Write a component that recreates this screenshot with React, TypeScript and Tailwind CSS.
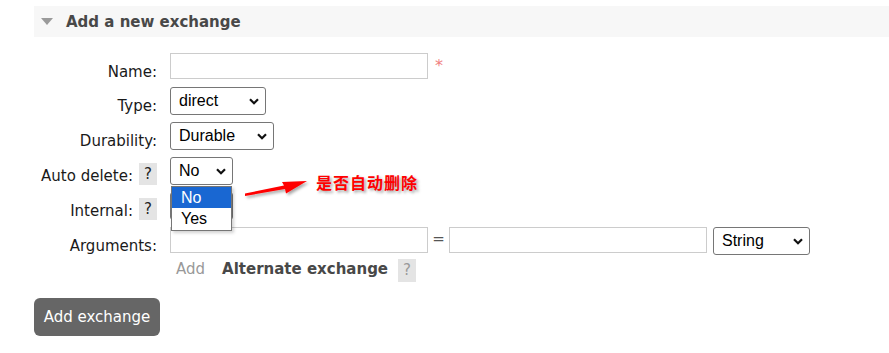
import React from "react";

type Opt = { value: string; options: string[]; width: string };

const Chevron = () => (
  <svg
    width="10"
    height="7"
    viewBox="0 0 10 7"
    className="pointer-events-none absolute right-[7px] top-[11px]"
  >
    <path d="M1 1.2 L5 5.2 L9 1.2" fill="none" stroke="#111" strokeWidth="2.2" />
  </svg>
);

const Select = ({ value, options, width }: Opt) => (
  <div className={`relative ${width}`}>
    <select
      defaultValue={value}
      className="h-[28px] w-full appearance-none rounded-[3px] border border-[#767676] bg-white pl-[8px] font-['Liberation_Sans',Arial,sans-serif] text-[16px] text-black outline-none"
    >
      {options.map((o) => (
        <option key={o}>{o}</option>
      ))}
    </select>
    <Chevron />
  </div>
);

const Help = () => (
  <span className="mt-[6px] ml-[6px] block h-[22px] w-[18px] bg-[#e4e4e4] pt-[3px] text-center leading-[16px] text-[#222]">
    ?
  </span>
);

type RowProps = {
  label: string;
  help?: boolean;
  h: string;
  children: React.ReactNode;
};

const Row = ({ label, help, h, children }: RowProps) => (
  <div className={`flex ${h}`}>
    <div className="flex w-[123px] items-start justify-end">
      <span className="pt-[9px] leading-[20px]">{label}</span>
      {help && <Help />}
    </div>
    <div className="ml-[13px] flex items-start">{children}</div>
  </div>
);

const TextBox = () => (
  <input
    type="text"
    className="h-[26px] w-[258px] border border-[#ccc] bg-white px-1 outline-none"
  />
);

export default function App() {
  return (
    <div className="relative min-h-[353px] w-[889px] bg-white pl-[34px] pt-[6px] font-['DejaVu_Sans',Verdana,sans-serif] text-[15px] text-[#1a1a1a]">
      {/* section header */}
      <div className="flex h-[31px] items-center bg-[#f7f7f7]">
        <svg width="12" height="7" viewBox="0 0 12 7" className="ml-[7px]">
          <polygon points="0,0 12,0 6,7" fill="#9a9a9a" />
        </svg>
        <h2 className="ml-[13px] text-[15px] font-bold leading-[20px] text-[#484848]">
          Add a new exchange
        </h2>
      </div>

      <div className="mt-[16px]">
        <Row label="Name:" h="h-[34px]">
          <TextBox />
          <span className="ml-[7px] mt-[3px] text-[16px] leading-[20px] text-[#f08080]">
            *
          </span>
        </Row>
        <Row label="Type:" h="h-[35px]">
          <Select
            value="direct"
            options={["direct", "fanout", "headers", "topic"]}
            width="w-[96px]"
          />
        </Row>
        <Row label="Durability:" h="h-[35px]">
          <Select
            value="Durable"
            options={["Durable", "Transient"]}
            width="w-[104px]"
          />
        </Row>
        <Row label="Auto delete:" help h="h-[35px]">
          <div className="relative">
            <Select value="No" options={["No", "Yes"]} width="w-[63px]" />
            {/* open dropdown list */}
            <ul className="absolute left-[1px] top-[29px] z-10 w-[61px] border border-[#767676] bg-white pb-[1px] font-['Liberation_Sans',Arial,sans-serif] text-[16px] leading-[21px] text-black shadow-[2px_2px_3px_rgba(0,0,0,0.18)]">
              <li className="bg-[#1967d2] pl-[9px] text-white">No</li>
              <li className="pl-[9px]">Yes</li>
            </ul>
          </div>
        </Row>
        <Row label="Internal:" help h="h-[35px]">
          <Select value="No" options={["No", "Yes"]} width="w-[63px]" />
        </Row>
        <Row label="Arguments:" h="h-[32px]">
          <TextBox />
          <span className="w-[21px] pt-[2px] text-center leading-[20px] text-[#555]">
            =
          </span>
          <TextBox />
          <div className="ml-[6px]">
            <Select
              value="String"
              options={["String", "Number", "Boolean", "List"]}
              width="w-[97px]"
            />
          </div>
        </Row>
        <div className="flex h-[23px]">
          <div className="w-[123px]" />
          <div className="ml-[13px] flex items-start pl-[6px]">
            <span className="leading-[20px] text-[#999]">Add</span>
            <span className="ml-[17px] font-bold leading-[20px] text-[#484848]">
              Alternate exchange
            </span>
            <span className="ml-[10px] block h-[23px] w-[18px] bg-[#e4e4e4] pt-[3px] text-center leading-[16px] text-[#999]">
              ?
            </span>
          </div>
        </div>
      </div>

      <button className="mt-[16px] h-[38px] w-[126px] rounded-[6px] bg-[#666] text-[15px] leading-[20px] text-white">
        Add exchange
      </button>

      {/* screenshot annotation */}
      <svg
        width="80"
        height="30"
        viewBox="0 0 80 30"
        className="absolute left-[240px] top-[174px]"
      >
        <defs>
          <filter id="sh" x="-20%" y="-50%" width="140%" height="200%">
            <feDropShadow dx="2" dy="2" stdDeviation="1.5" floodColor="#000" floodOpacity="0.35" />
          </filter>
        </defs>
        <polygon
          points="5,19.5 44,11.5 42,8 67,7 46,19.5 45,15 5,22"
          fill="#f00"
          filter="url(#sh)"
        />
      </svg>
      <span className="absolute left-[316px] top-[172px] font-['Noto_Sans_CJK_SC',sans-serif] text-[16px] font-bold leading-[20px] tracking-[1px] text-[#f00] [text-shadow:2px_2px_3px_rgba(0,0,0,0.35)]">
        是否自动删除
      </span>
    </div>
  );
}
